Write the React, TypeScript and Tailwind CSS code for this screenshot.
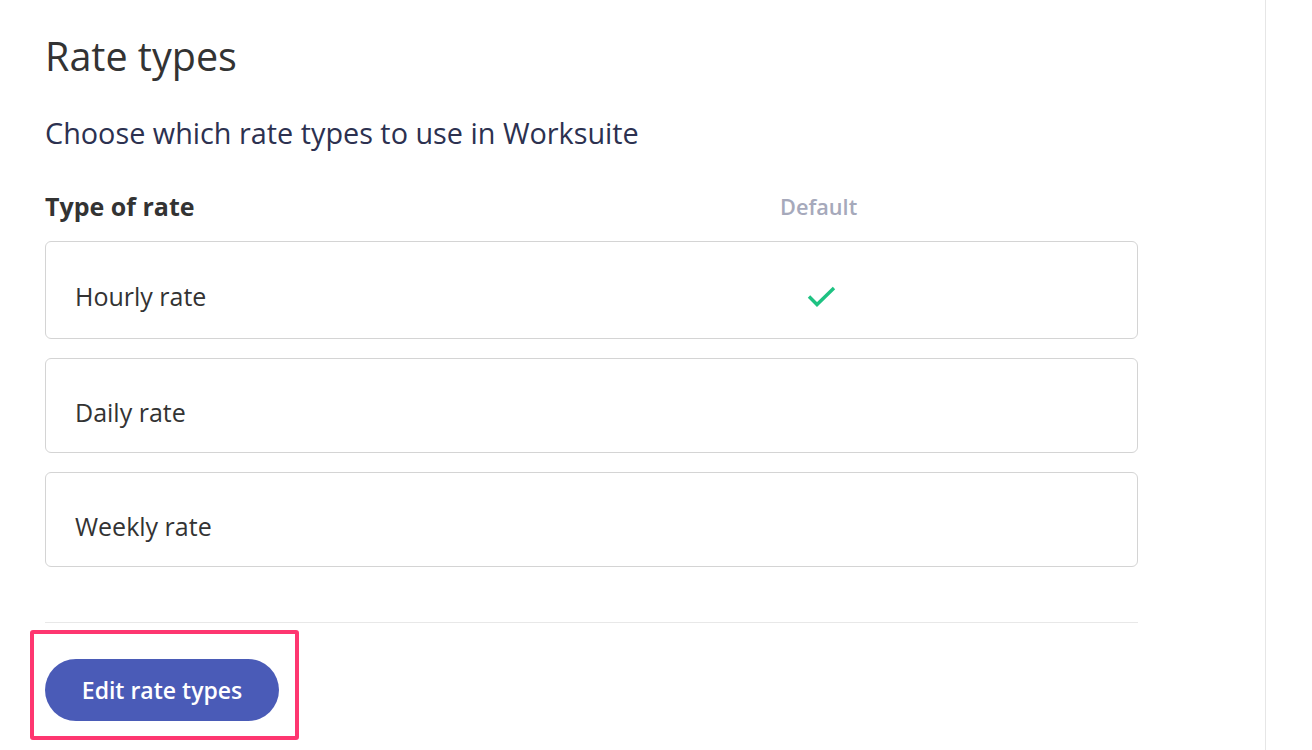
import React from "react";

const rows = [
  { name: "Hourly rate", def: true, h: "h-[98px]" },
  { name: "Daily rate", def: false, h: "h-[95px]" },
  { name: "Weekly rate", def: false, h: "h-[95px]" },
];

export default function App() {
  return (
    <div
      className="flex h-[750px] w-[1312px] bg-white overflow-hidden"
      style={{ fontFamily: '"Open Sans", "Noto Sans", sans-serif' }}
    >
      <div className="w-[1266px] border-r border-[#e6e6e6] pl-[45px] pr-[127px]">
        <h1 className="mt-[31px] text-[39.5px] leading-[50px] text-[#333333] font-normal">
          Rate types
        </h1>
        <p className="mt-[34px] text-[28.8px] leading-[36px] text-[#2c3150]">
          Choose which rate types to use in Worksuite
        </p>
        <div className="mt-[41px] flex items-center h-[30px]">
          <div className="w-[735px] text-[25px] font-bold text-[#333333]">Type of rate</div>
          <div className="w-[76px] text-center text-[21.7px] font-semibold text-[#a6a9bb] whitespace-nowrap">Default</div>
        </div>
        <div className="mt-[19px] flex flex-col gap-[19px]">
          {rows.map((r) => (
            <div
              key={r.name}
              className={`${r.h} flex items-center border border-[#d4d4d4] rounded-[6px] pt-[14px]`}
            >
              <div className="w-[735px] pl-[29px] text-[25px] text-[#333333]">{r.name}</div>
              <div className="w-[76px] flex justify-center">
                {r.def && (
                  <svg width="32" height="24" viewBox="0 0 32 24" fill="none" className="ml-[6px]">
                    <path d="M3 11.5 L11 19.5 L28 3" stroke="#1ec282" strokeWidth="3.4" />
                  </svg>
                )}
              </div>
            </div>
          ))}
        </div>
        <div className="mt-[55px] border-t border-[#e8e8e8]" />
        <div className="relative mt-[36px] inline-block">
          <button className="h-[62px] w-[234px] rounded-full bg-[#4a5bb7] text-white text-[23px] font-semibold whitespace-nowrap">
            Edit rate types
          </button>
          <div className="absolute left-[-15px] right-[-20px] top-[-29px] bottom-[-19px] border-[4px] border-[#fe3670] rounded-[3px]" />
        </div>
      </div>
      <div className="flex-1" />
    </div>
  );
}
